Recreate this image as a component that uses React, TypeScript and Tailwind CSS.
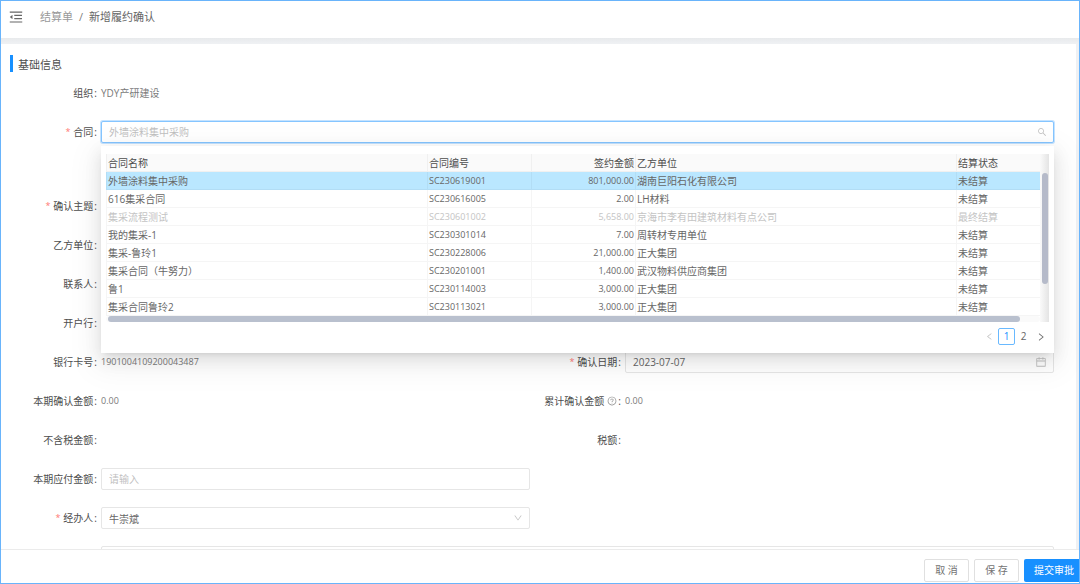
import { useState } from 'react';
import type { ReactNode } from 'react';
import {
  AiOutlineCalendar,
  AiOutlineDown,
  AiOutlineLeft,
  AiOutlineMenuFold,
  AiOutlineQuestionCircle,
  AiOutlineRight,
  AiOutlineSearch,
} from 'react-icons/ai';
import clsx from 'clsx';

type Contract = {
  name: string;
  code: string;
  amount: string;
  supplier: string;
  status: string;
  disabled?: boolean;
};

const contracts: Contract[] = [
  { name: '外墙涂料集中采购', code: 'SC230619001', amount: '801,000.00', supplier: '湖南巨阳石化有限公司', status: '未结算' },
  { name: '616集采合同', code: 'SC230616005', amount: '2.00', supplier: 'LH材料', status: '未结算' },
  { name: '集采流程测试', code: 'SC230601002', amount: '5,658.00', supplier: '京海市李有田建筑材料有点公司', status: '最终结算', disabled: true },
  { name: '我的集采-1', code: 'SC230301014', amount: '7.00', supplier: '周转材专用单位', status: '未结算' },
  { name: '集采-鲁玲1', code: 'SC230228006', amount: '21,000.00', supplier: '正大集团', status: '未结算' },
  { name: '集采合同（牛努力）', code: 'SC230201001', amount: '1,400.00', supplier: '武汉物料供应商集团', status: '未结算' },
  { name: '鲁1', code: 'SC230114003', amount: '3,000.00', supplier: '正大集团', status: '未结算' },
  { name: '集采合同鲁玲2', code: 'SC230113021', amount: '3,000.00', supplier: '正大集团', status: '未结算' },
];

const control =
  'block h-[22px] w-full appearance-none rounded-[2px] border bg-white px-[7px] text-[10px] text-[#666] outline-none placeholder:text-[#bfbfbf]';
const box = clsx(control, 'border-[#e6e6e6]');
const activeBox = clsx(control, 'border-[#85c5ff] shadow-[0_0_0_1px_rgba(24,144,255,0.25)]');

type FieldProps = {
  label: string;
  id?: string;
  required?: boolean;
  full?: boolean;
  help?: boolean;
  className?: string;
  children?: ReactNode;
};

function Field({ label, id, required, full, help, className, children }: FieldProps) {
  const text = (
    <>
      {required && <span className="mr-[3px] text-[9px] text-[#ff7875]">*</span>}
      {label}
      {help && <AiOutlineQuestionCircle className="ml-[3px] size-[10px] text-[#8c8c8c]" />}
      <span className="ml-px">:</span>
    </>
  );
  const labelClass =
    'flex h-[22px] w-[95px] shrink-0 items-center justify-end pr-1 whitespace-nowrap text-[#4d4d4d]';

  return (
    <div className={clsx('flex', full && 'col-span-2', className)}>
      {id ? (
        <label htmlFor={id} className={labelClass}>
          {text}
        </label>
      ) : (
        <span className={labelClass}>{text}</span>
      )}
      <div className="relative h-[22px] min-w-0 flex-1 leading-[22px] text-[#7a7a7a]">{children}</div>
    </div>
  );
}

function ContractDropdown() {
  const [selected, setSelected] = useState('SC230619001');
  const cell = 'border-b border-l border-black/4 px-px pt-px pb-0 font-normal truncate';

  return (
    <div className="absolute inset-x-0 top-full z-10 mt-[3px] bg-white px-[5px] pt-2 pb-2 shadow-[0_3px_6px_-4px_rgba(0,0,0,0.16),0_6px_16px_rgba(0,0,0,0.1),0_9px_28px_8px_rgba(0,0,0,0.05)]">
      <div className="flex">
        <div className="min-w-0 flex-1">
          <table className="w-full table-fixed border-separate border-spacing-0 text-left leading-[16px]">
            <colgroup>
              <col />
              <col className="w-[104px]" />
              <col className="w-[104px]" />
              <col />
              <col className="w-[84px]" />
            </colgroup>
            <thead>
              <tr className="h-[18px] bg-[#fafafa] text-[#4d4d4d]">
                <th className={cell}>合同名称</th>
                <th className={cell}>合同编号</th>
                <th className={clsx(cell, 'text-right')}>签约金额</th>
                <th className={cell}>乙方单位</th>
                <th className={cell}>结算状态</th>
              </tr>
            </thead>
            <tbody>
              {contracts.map((item) => (
                <tr
                  key={item.code}
                  onClick={() => !item.disabled && setSelected(item.code)}
                  className={clsx(
                    'h-[18px]',
                    item.code === selected && 'bg-[#bae7ff]',
                    item.disabled ? 'text-[#c4c4c4]' : 'cursor-pointer text-[#666]',
                  )}
                >
                  <td className={cell}>{item.name}</td>
                  <td className={clsx(cell, 'text-[9px]')}>{item.code}</td>
                  <td className={clsx(cell, 'text-right text-[9px]')}>{item.amount}</td>
                  <td className={cell}>{item.supplier}</td>
                  <td className={cell}>{item.status}</td>
                </tr>
              ))}
            </tbody>
          </table>
          {/* horizontal scroll bar */}
          <div className="h-[6px] rounded-full bg-[#fafafa] pr-5 pl-[2px]">
            <div className="h-full rounded-full bg-[#b9c0ce]" />
          </div>
        </div>
        <div className="w-[9px] bg-linear-to-r from-[#fafafa] to-[#e4e4e4] pt-[19px] pl-[2px]">
          <div className="h-[111px] w-[6px] rounded-full bg-[#b5bac9]" />
        </div>
      </div>
      <nav aria-label="分页" className="mt-[6px] flex items-center justify-end text-[10px] text-[#666]">
        <button type="button" aria-label="上一页" disabled className="flex h-[17px] w-[17px] items-center justify-center text-[#bfbfbf]">
          <AiOutlineLeft className="size-[9px]" />
        </button>
        <button type="button" className="h-[17px] w-[17px] rounded-[2px] border border-[#69b9ff] leading-[15px] text-[#1890ff]">
          1
        </button>
        <button type="button" className="h-[17px] w-[17px] leading-[17px]">
          2
        </button>
        <button type="button" aria-label="下一页" className="flex h-[17px] w-[17px] items-center justify-center">
          <AiOutlineRight className="size-[10px]" />
        </button>
      </nav>
    </div>
  );
}

export default function App() {
  return (
    <div className="flex h-screen flex-col overflow-hidden border border-[#69b4fb] bg-white font-['Open_Sans','Noto_Sans_CJK_SC',sans-serif] text-[10px]">
      <header className="flex h-[37px] shrink-0 items-center gap-4 pb-[5px] pl-[7px] text-[11px]">
        <button type="button" aria-label="收起菜单" className="text-[#666]">
          <AiOutlineMenuFold className="size-4" />
        </button>
        <nav aria-label="面包屑" className="flex gap-[6px]">
          <a href="#" className="text-[#999]">
            结算单
          </a>
          <span className="text-[#808080]">/</span>
          <span className="text-[#666]">新增履约确认</span>
        </nav>
      </header>

      <main className="min-h-0 flex-1 overflow-hidden bg-linear-to-b from-[#e8eaec] to-[#eff1f4] to-[6px] pt-[6px] pr-[3px]">
        <form className="bg-white pt-[11px] pr-[22px] pb-5 pl-[5px]">
          <h2 className="ml-1 h-[17px] border-l-3 border-[#1890ff] pl-[5px] text-[11px] leading-[19px] text-[#4d4d4d]">
            基础信息
          </h2>
          <div className="mt-[10px] grid grid-cols-2 gap-y-[17px]">
            <Field label="组织" full>
              YDY产研建设
            </Field>
            <Field label="合同" id="contract" required full className="mb-[35px]">
              <input id="contract" type="text" placeholder="外墙涂料集中采购" className={activeBox} />
              <AiOutlineSearch className="absolute top-[6px] right-[7px] size-[10px] text-[#bfbfbf]" />
              <ContractDropdown />
            </Field>
            <Field label="确认主题" id="subject" required full>
              <input id="subject" type="text" className={box} />
            </Field>
            <Field label="乙方单位" full />
            <Field label="联系人" full />
            <Field label="开户行" full />
            <Field label="银行卡号">
              <span className="block text-[9px]">1901004109200043487</span>
            </Field>
            <Field label="确认日期" id="date" required>
              <input id="date" type="text" defaultValue="2023-07-07" className={box} />
              <AiOutlineCalendar className="absolute top-[5px] right-[7px] size-3 text-[#bfbfbf]" />
            </Field>
            <Field label="本期确认金额">
              <span className="block text-[9px]">0.00</span>
            </Field>
            <Field label="累计确认金额" help>
              <span className="block text-[9px]">0.00</span>
            </Field>
            <Field label="不含税金额" />
            <Field label="税额" />
            <Field label="本期应付金额" id="payable">
              <input id="payable" type="text" placeholder="请输入" className={box} />
            </Field>
            <Field label="经办人" id="operator" required className="col-start-1">
              <select id="operator" className={box}>
                <option>牛崇斌</option>
              </select>
              <AiOutlineDown className="pointer-events-none absolute top-[6px] right-[7px] size-[10px] text-[#bfbfbf]" />
            </Field>
            <div className="col-span-2 pl-[95px]">
              <textarea aria-label="备注" rows={4} className="block w-full resize-none rounded-[2px] border border-[#e6e6e6] px-[7px] outline-none" />
            </div>
          </div>
        </form>
      </main>

      <footer className="flex h-[34px] shrink-0 items-center justify-end gap-[5px] border-t border-[#ebebeb] pt-[7px] text-[#737373]">
        <button type="button" className="h-[23px] w-[45px] rounded-[2px] border border-[#e0e0e0]">
          取 消
        </button>
        <button type="button" className="h-[23px] w-[45px] rounded-[2px] border border-[#e0e0e0]">
          保 存
        </button>
        <button type="submit" className="h-[23px] rounded-l-[2px] bg-[#1890ff] pr-[5px] pl-[10px] text-white">
          提交审批
        </button>
      </footer>
    </div>
  );
}
